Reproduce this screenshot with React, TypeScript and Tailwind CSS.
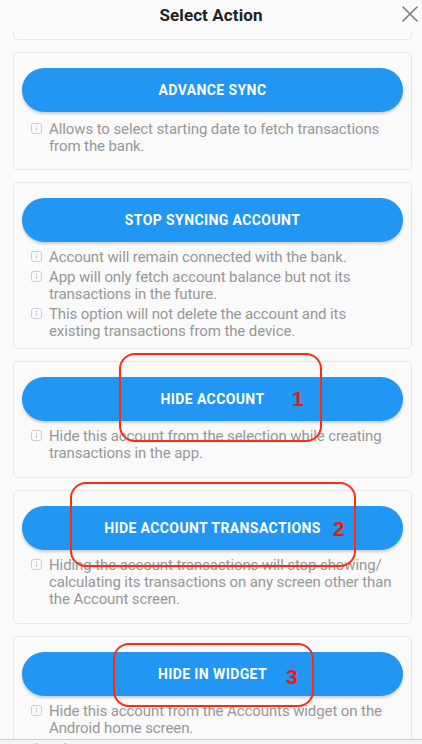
import React from "react";

type Card = { label: string; items: string[][]; mt: string; pb: string };

const cards: Card[] = [
  {
    label: "ADVANCE SYNC",
    items: [["Allows to select starting date to fetch transactions from the bank."]],
    mt: "mt-[9px]",
    pb: "pb-[14px]",
  },
  {
    label: "STOP SYNCING ACCOUNT",
    items: [
      ["Account will remain connected with the bank."],
      ["App will only fetch account balance but not its transactions in the future."],
      ["This option will not delete the account and its existing transactions from the device."],
    ],
    mt: "mt-[7px]",
    pb: "pb-[8px]",
  },
  {
    label: "HIDE ACCOUNT",
    items: [["Hide this account from the selection while creating transactions in the app."]],
    mt: "mt-[7px]",
    pb: "pb-[15px]",
  },
  {
    label: "HIDE ACCOUNT TRANSACTIONS",
    items: [
      [
        "Hiding the account transactions will stop showing/ calculating its transactions on any screen other than the Account screen.",
      ],
    ],
    mt: "mt-[7px]",
    pb: "pb-[15px]",
  },
  {
    label: "HIDE IN WIDGET",
    items: [["Hide this account from the Accounts widget on the Android home screen."]],
    mt: "mt-[7px]",
    pb: "pb-[15px]",
  },
];

function InfoIcon() {
  return (
    <svg width="11" height="11" viewBox="0 0 11 11" className="shrink-0 mt-[2px]">
      <rect x="0.5" y="0.5" width="10" height="10" rx="2.2" fill="none" stroke="#c8cbd9" strokeWidth="1" />
      <circle cx="5.5" cy="3.4" r="0.6" fill="#b8bccb" />
      <line x1="5.5" y1="4.9" x2="5.5" y2="7.8" stroke="#b8bccb" strokeWidth="0.9" />
    </svg>
  );
}

function Annotation({ cls, num, numCls }: { cls: string; num: string; numCls: string }) {
  return (
    <>
      <div className={`absolute border-[2px] border-[#ff2a12] rounded-[16px] ${cls}`} />
      <div
        className={`absolute text-[21px] leading-none font-bold text-[#f0180a] ${numCls}`}
        style={{ fontFamily: '"Liberation Sans", Arial, sans-serif' }}
      >
        {num}
      </div>
    </>
  );
}

export default function App() {
  return (
    <div
      className="relative w-[422px] h-[744px] bg-[#fafafa] flex flex-col overflow-hidden"
      style={{ fontFamily: 'Roboto, "Noto Sans", sans-serif' }}
    >
      <div className="relative h-[32px] shrink-0 flex items-center justify-center">
        <span className="text-[17px] font-bold text-[#222222] tracking-[0.1px]">Select Action</span>
        <svg className="absolute right-[4px] top-[6px]" width="16" height="16" viewBox="0 0 16 16">
          <path d="M1 1 L15 15 M15 1 L1 15" stroke="#7d7d7d" strokeWidth="1.6" strokeLinecap="round" />
        </svg>
      </div>

      <div className="flex-1 overflow-hidden flex flex-col gap-3 pl-[13px] pr-[10px]">
        <div className="h-[8px] shrink-0 border border-t-0 border-[#e6e6e6] rounded-b-[5px]" />
        {cards.map((c) => (
          <div
            key={c.label}
            className={`shrink-0 border border-[#e6e6e6] rounded-[5px] px-2 pt-[15px] ${c.pb}`}
          >
            <button className="w-full h-[44px] rounded-full bg-[#2196f3] text-white text-[14px] font-bold tracking-[0.4px] shadow-[0_2px_3px_rgba(0,0,0,0.18)] flex items-center justify-center">
              {c.label}
            </button>
            <ul className={`${c.mt} flex flex-col gap-[3px] pl-[9px] pr-[4px]`}>
              {c.items.map((it, i) => (
                <li key={i} className="flex gap-[7px] items-start">
                  <InfoIcon />
                  <span className="text-[15px] leading-[17px] tracking-[-0.1px] text-[#979797]">{it[0]}</span>
                </li>
              ))}
            </ul>
          </div>
        ))}
      </div>

      <div className="h-[5px] shrink-0 border-t border-[#d0d0d0] bg-[#f4f4f4] overflow-hidden">
        <div className="text-[13px] leading-none pt-[2px] pl-[2px] text-[#b0b0b0]">complete the process</div>
      </div>

      <Annotation cls="left-[119px] top-[353px] w-[203px] h-[89px]" num="1" numCls="left-[292px] top-[388px]" />
      <Annotation cls="left-[70px] top-[482px] w-[286px] h-[85px]" num="2" numCls="left-[333px] top-[518px]" />
      <Annotation cls="left-[113px] top-[643px] w-[201px] h-[64px]" num="3" numCls="left-[286px] top-[666px]" />
    </div>
  );
}
